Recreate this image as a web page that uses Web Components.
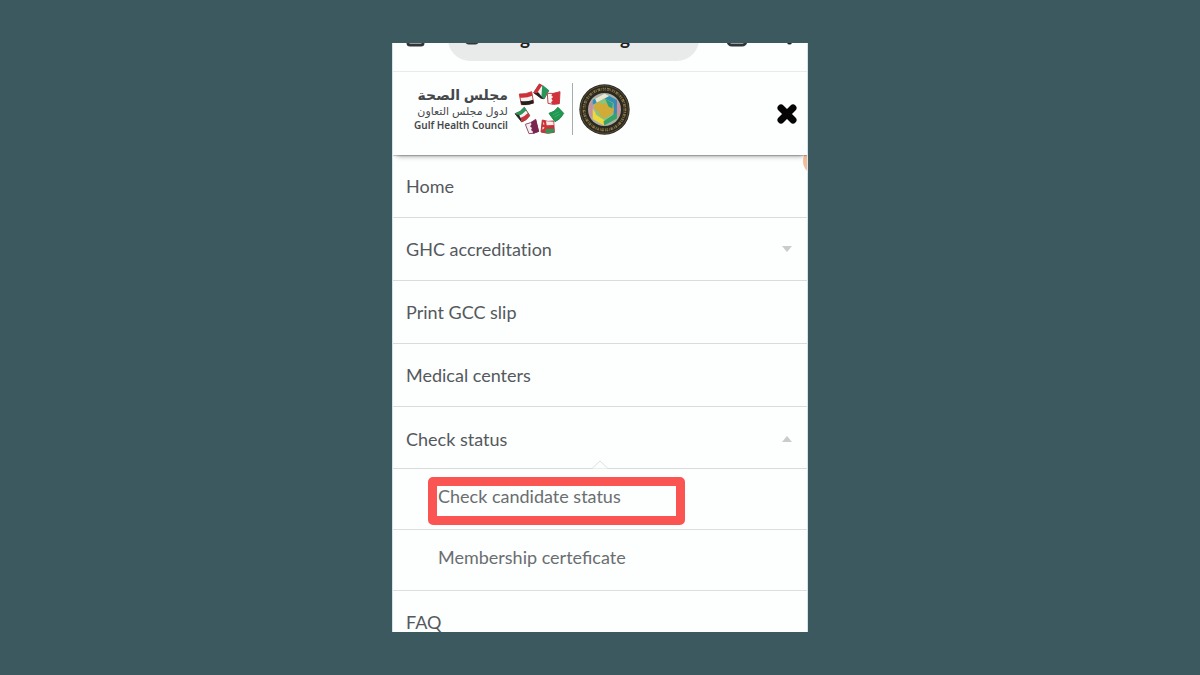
<!DOCTYPE html>
<html lang="en">
<head>
<meta charset="utf-8">
<meta name="viewport" content="width=device-width, initial-scale=1">
<title>Gulf Health Council</title>
<style>
  body {
    margin: 0;
    height: 100vh;
    box-sizing: border-box;
    padding: 43px 16px;
    display: flex;
    flex-direction: column;
    align-items: center;
    background: #3c595f;
    font-family: Lato, "Noto Sans", sans-serif;
  }
</style>
</head>
<body>
<phone-screen>
  <browser-bar></browser-bar>
  <site-header></site-header>
  <side-menu>
    <menu-item>Home</menu-item>
    <menu-item arrow="down">GHC accreditation</menu-item>
    <menu-item>Print GCC slip</menu-item>
    <menu-item>Medical centers</menu-item>
    <menu-item arrow="up">Check status</menu-item>
    <sub-item marked>Check candidate status</sub-item>
    <sub-item>Membership certeficate</sub-item>
    <menu-item>FAQ</menu-item>
  </side-menu>
</phone-screen>

<script>
class PhoneScreen extends HTMLElement {
  connectedCallback() {
    this.attachShadow({ mode: 'open' });
    this.shadowRoot.innerHTML = `
      <style>
        :host {
          display: flex;
          flex-direction: column;
          flex: 1;
          min-height: 0;
          width: 100%;
          max-width: 416px;
          box-sizing: border-box;
          overflow: hidden;
          border: 0 solid #d3e5eb;
          border-width: 0 1px;
          background: #fdfefe;
        }
      </style>
      <slot></slot>
    `;
  }
}

// only the lower edge of the bar is in view, its content grows upwards
class BrowserBar extends HTMLElement {
  connectedCallback() {
    this.attachShadow({ mode: 'open' });
    this.shadowRoot.innerHTML = `
      <style>
        :host {
          display: flex;
          flex: none;
          align-items: flex-end;
          height: 28px;
          padding: 0 13px;
          overflow: hidden;
          border-bottom: 1px solid #e9ebeb;
        }
        svg { display: block; flex: none; margin-bottom: 24px; fill: none; stroke: #333639; stroke-width: 3; }
        .address {
          flex: 1;
          display: flex;
          align-items: flex-end;
          box-sizing: border-box;
          height: 44px;
          margin: 0 27px 10px 23px;
          padding: 0 69px 11px 16px;
          border-radius: 24px;
          background: #e9ebeb;
          color: #222;
          font-size: 19px;
          font-weight: 700;
          line-height: 24px;
        }
        .address svg { margin-bottom: 5px; }
        .address .host { flex: 1; display: flex; justify-content: space-between; padding-left: 40px; }
        .dots { margin-left: 36px; }
      </style>
      <svg width="19" height="20" viewBox="0 0 19 20"><path d="M2 8v8q0 2 2 2h11q2 0 2-2V8L9 2z"/></svg>
      <div class="address">
        <svg width="16" height="16" viewBox="0 0 16 16"><rect x="2" y="4" width="12" height="10" rx="3"/></svg>
        <span class="host"><span>g</span><span>g</span></span>
      </div>
      <svg width="22" height="20" viewBox="0 0 22 20"><rect x="2" y="2" width="18" height="16" rx="4"/></svg>
      <svg class="dots" width="10" height="20" viewBox="0 0 10 20"><path fill="#222" stroke="none" d="M3 14a2.500 2.500 0 0 1 5 0v1a2.500 2.500 0 0 1-5 0z"/></svg>
    `;
  }
}

class GccLogo extends HTMLElement {
  connectedCallback() {
    this.attachShadow({ mode: 'open' });
    this.shadowRoot.innerHTML = `
      <style>
        :host { display: flex; align-items: center; gap: 6px; color: #45484a; }
        .name {
          display: flex;
          flex-direction: column;
          align-items: flex-end;
          font-family: "Noto Sans", "DejaVu Sans", sans-serif;
          font-weight: 600;
          white-space: nowrap;
        }
        .title { font-size: 14px; line-height: 17px; font-weight: 700; }
        .sub { font-size: 11px; line-height: 15px; font-weight: 400; }
        .latin { font-size: 10px; line-height: 14px; }
        .rule { width: 1px; height: 52px; background: #a9acac; }
        svg { display: block; flex: none; }
      </style>
      <div class="name">
        <span class="title" lang="ar" dir="rtl">مجلس الصحة</span>
        <span class="sub" lang="ar" dir="rtl">لدول مجلس التعاون</span>
        <span class="latin">Gulf Health Council</span>
      </div>
      <svg width="52" height="52" viewBox="3 6 156 156">
        <g stroke-width="3" stroke-linejoin="round">
          <path fill="#f5f2f1" stroke="#b9484c" d="M19 39q18 2 37-7l6 34q-18 7-37 5z"/>
          <path fill="#cf3038" d="M19 39q18 2 37-7l2 12q-18 8-37 6z"/>
          <path fill="#24211f" d="M23 60q19 3 37-4l2 11q-18 7-37 4z"/>

          <path fill="#f5f2f1" stroke="#5b5d4c" d="M79 9l28 20-14 25-31-19z"/>
          <path fill="#27965b" d="M88 11l20 17-14 26-9-6z"/>
          <path fill="#24211f" d="M68 30l9 5 15 19-8-1-22-17z"/>
          <path fill="#d0313a" d="M79 8l9 4-16 25-11-2z"/>

          <path fill="#f8f3f2" stroke="#c4424a" d="M103 37q18 3 38-5l-2 36q-17 5-34-1z"/>
          <path fill="#d0313a" d="M119 37l22-5-2 37-21 1-4-6 5-5-4-6 5-5-5-5z"/>

          <path fill="#209a51" stroke="#1c8547" d="M108 97q16-3 27-18l17 18q-9 18-26 25z"/>
          <path d="M121 101l17-9M125 108l15-8" stroke="#4fb578" stroke-width="2"/>

          <path fill="#cf3138" stroke="#b9353c" d="M88 117q16 7 34 3l2 34q-20 6-40-1z"/>
          <path fill="#f4efee" d="M99 121l22 1 1 10-21 1z"/>
          <path fill="#2f9656" d="M98 144l25-1v11q-12 4-26 2z"/>
          <path fill="#f4efee" d="M90 122l5 8-4 1zM89 137l6 3-7 6z"/>

          <path fill="#f3eff0" stroke="#91526d" d="M37 130q17-3 31-15l9 36q-14 8-29 7z"/>
          <path fill="#7a2450" d="M54 124l15-9 9 37-18 6-1-7-5-4 3-6-6-5 4-5z"/>

          <path fill="#f5f2f1" stroke="#5f5c50" d="M6 98q17-4 28-19l16 24q-9 15-24 20z"/>
          <path fill="#2c9659" d="M8 97q15-5 26-19l6 10q-11 12-23 17z"/>
          <path fill="#cb333b" d="M22 111q12-4 23-15l6 9q-9 13-24 18z"/>
          <path fill="#24211f" d="M6 98l12 4 5 9 3 12z"/>
        </g>
      </svg>
      <div class="rule"></div>
      <svg width="51" height="51" viewBox="201 18 152 152">
        <circle cx="277" cy="94" r="75" fill="#2b2822"/>
        <circle cx="277" cy="94" r="71" fill="none" stroke="#6b603a" stroke-width="2"/>
        <circle cx="277" cy="94" r="61" fill="none" stroke="#8d7b42" stroke-width="8" stroke-dasharray="5 2 3 3 8 2 2 3"/>
        <circle cx="277" cy="94" r="60" fill="none" stroke="#2b2822" stroke-width="2" stroke-dasharray="7 4 3 2"/>
        <circle cx="277" cy="94" r="49" fill="#aeb0a4"/>
        <path fill="#c9909a" d="M232 78l10-12v54l-10-9zM312 66l11 14v30l-11 10z"/>
        <path fill="#2e91b5" d="M277 46l37 20v14l-37-19-35 19V66z"/>
        <path fill="#e9e7cf" d="M277 46l14 8-22 12-15 8-5-12z"/>
        <path fill="#efd83c" d="M242 92l12 18 30 20-8 12-34-20z"/>
        <path fill="#36a468" d="M276 142l38-21V97l-15 15-25 17z"/>
        <path fill="#3b87b9" d="M303 72l11-6v36l-11 9z"/>
        <path fill="#8cc47c" d="M277 61l27 15v33l-27 17-26-17V76z"/>
        <path fill="#d1aa37" d="M245 82l14-10 14 7 9-5 9 12 15 6-6 15-21 13-11-3-10-18-12-9z"/>
        <path fill="#30a180" d="M279 62l23 13-2 16-11-6z"/>
      </svg>
    `;
  }
}

class SiteHeader extends HTMLElement {
  connectedCallback() {
    this.attachShadow({ mode: 'open' });
    this.shadowRoot.innerHTML = `
      <style>
        :host {
          display: flex;
          flex: none;
          align-items: center;
          justify-content: space-between;
          position: relative;
          z-index: 2;
          height: 74px;
          padding: 0 9px 9px 21px;
          background: #fdfefe;
          box-shadow: 0 5px 5px -4px rgba(0,0,0,0.4), 0 1px 1px rgba(0,0,0,0.2);
        }
        a { color: inherit; text-decoration: none; }
        button {
          display: block;
          margin: 10px 0 0;
          padding: 0;
          border: 0;
          background: none;
          cursor: pointer;
        }
        svg { display: block; }
      </style>
      <a href="#"><gcc-logo></gcc-logo></a>
      <button type="button" aria-label="Close menu">
        <svg width="22" height="22" viewBox="0 0 22 22"><path d="M5 5l12 12M17 5L5 17" stroke="#050505" stroke-width="7" stroke-linecap="round"/></svg>
      </button>
    `;
  }
}

class SideMenu extends HTMLElement {
  connectedCallback() {
    this.attachShadow({ mode: 'open' });
    this.shadowRoot.innerHTML = `
      <style>
        :host { display: block; position: relative; }
        nav { display: flex; flex-direction: column; }
        .bubble {
          position: absolute;
          top: -8px;
          right: -24px;
          width: 28px;
          height: 28px;
          border-radius: 50%;
          background: #f4bd99;
        }
      </style>
      <nav><slot></slot></nav>
      <div class="bubble"></div>
    `;
  }
}

class MenuItem extends HTMLElement {
  connectedCallback() {
    const arrow = this.getAttribute('arrow');
    const shape = arrow === 'up' ? 'M0 6L5 0l5 6z' : 'M0 0h10L5 6z';
    this.attachShadow({ mode: 'open' });
    this.shadowRoot.innerHTML = `
      <style>
        :host { display: block; position: relative; border-bottom: 1px solid #d9dcdc; }
        a {
          display: flex;
          align-items: center;
          justify-content: space-between;
          box-sizing: border-box;
          height: 62px;
          padding: 0 15px 0 13px;
          color: #54595d;
          font-size: 18px;
          font-variant-ligatures: none;
          line-height: 24px;
          text-decoration: none;
        }
        /* an open item sits closer to its submenu */
        :host([arrow="up"]) a { height: 61px; padding-top: 2px; }
        svg { display: block; }
        .notch { position: absolute; bottom: -1px; left: 48%; }
      </style>
      <a href="#"><slot></slot>${arrow ? `<svg width="10" height="6" viewBox="0 0 10 6"><path fill="#c9cccc" d="${shape}"/></svg>` : ''}</a>
      ${arrow === 'up' ? '<svg class="notch" width="16" height="9" viewBox="0 0 16 9"><path d="M0 8.500L8 1l8 7.500" fill="#fdfefe" stroke="#dfe2e2"/></svg>' : ''}
    `;
  }
}

class SubItem extends HTMLElement {
  connectedCallback() {
    this.attachShadow({ mode: 'open' });
    this.shadowRoot.innerHTML = `
      <style>
        :host { display: block; position: relative; border-bottom: 1px solid #dcdfdf; }
        a {
          display: block;
          height: 45px;
          padding: 15px 16px 0 45px;
          color: #6a6e70;
          font-size: 18px;
          line-height: 24px;
          text-decoration: none;
        }
        :host([marked])::before {
          content: '';
          position: absolute;
          top: 8px;
          left: 35px;
          width: 62%;
          height: 48px;
          box-sizing: border-box;
          border: 9px solid #fa5553;
          border-radius: 5px;
          pointer-events: none;
        }
      </style>
      <a href="#"><slot></slot></a>
    `;
  }
}

customElements.define('phone-screen', PhoneScreen);
customElements.define('browser-bar', BrowserBar);
customElements.define('gcc-logo', GccLogo);
customElements.define('site-header', SiteHeader);
customElements.define('side-menu', SideMenu);
customElements.define('menu-item', MenuItem);
customElements.define('sub-item', SubItem);
</script>
</body>
</html>
